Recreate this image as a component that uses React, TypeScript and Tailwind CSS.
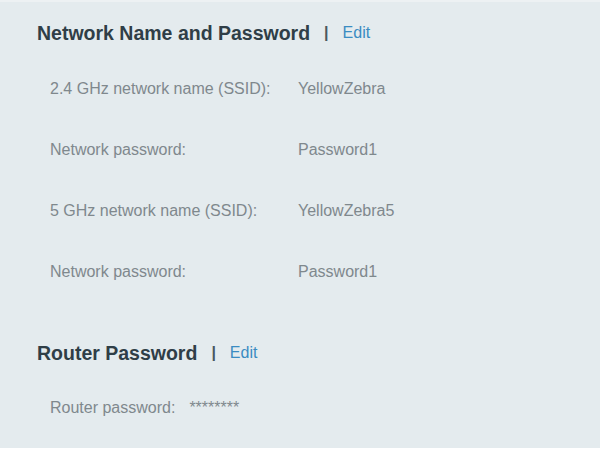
import React from 'react';

interface Row {
  label: string;
  value: string;
}

const wifiRows: Row[] = [
  { label: '2.4 GHz network name (SSID):', value: 'YellowZebra' },
  { label: 'Network password:', value: 'Password1' },
  { label: '5 GHz network name (SSID):', value: 'YellowZebra5' },
  { label: 'Network password:', value: 'Password1' },
];

const SectionTitle: React.FC<{ title: string }> = ({ title }) => (
  <div className="flex items-center h-6 pl-[37px]">
    <h2 className="text-[19.5px] leading-6 font-bold text-[#2f3e47]">{title}</h2>
    <span className="ml-[14px] text-[16px] font-bold text-[#4a5860]">|</span>
    <a href="#" className="ml-[14px] text-[16px] text-[#3b8cc2]">Edit</a>
  </div>
);

const App: React.FC = () => {
  return (
    <div className="w-[600px] h-[450px] bg-white overflow-hidden font-['Liberation_Sans',Arial,sans-serif]">
      <div className="h-[448px] bg-[#e4ebee] border-t-2 border-[#edf1f3] pt-[19px]">
        <SectionTitle title="Network Name and Password" />

        <div className="mt-[34px] pl-[50px] flex flex-col gap-[41px]">
          {wifiRows.map((row, i) => (
            <div key={i} className="grid grid-cols-[248px_1fr] text-[16px] leading-5 text-[#7f888d]">
              <span>{row.label}</span>
              <span>{row.value}</span>
            </div>
          ))}
        </div>

        <div className="mt-[59px]">
          <SectionTitle title="Router Password" />
        </div>

        <div className="mt-[33px] pl-[50px] flex gap-[14px] text-[16px] leading-5 text-[#7f888d]">
          <span>Router password:</span>
          <span>********</span>
        </div>
      </div>
    </div>
  );
};

export default App;
